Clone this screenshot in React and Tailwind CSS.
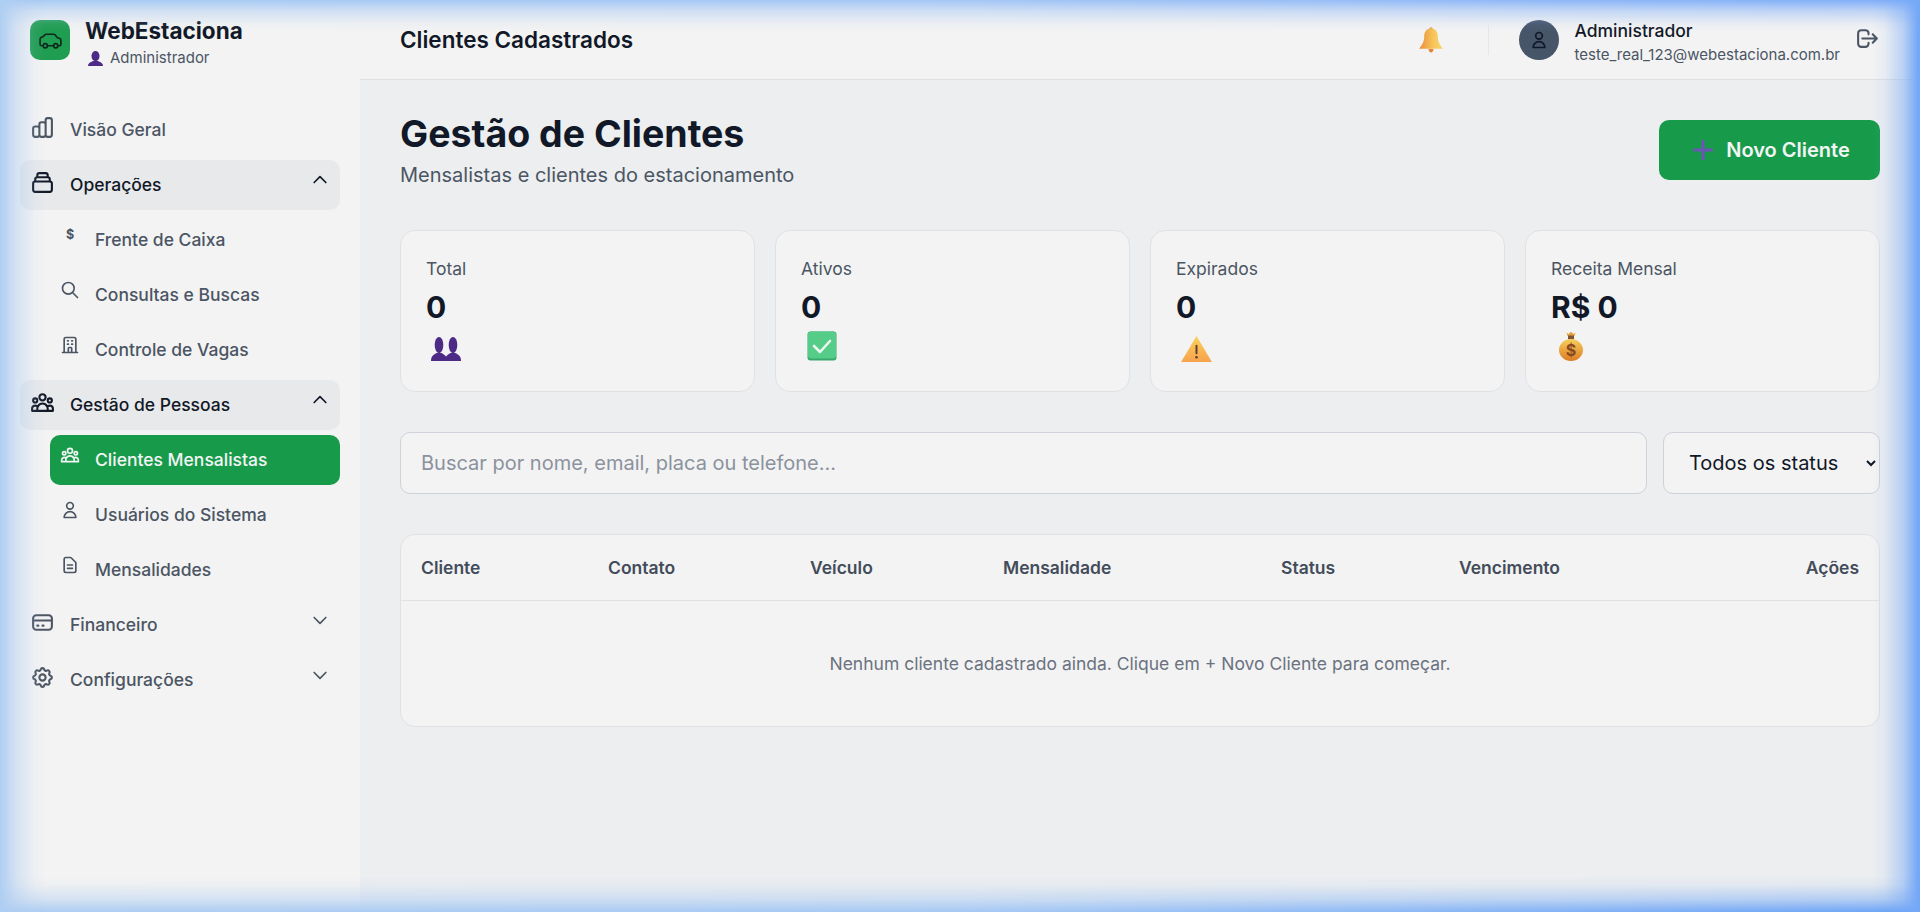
import React from 'react'
import {
  HiOutlineChartBar,
  HiOutlineCollection,
  HiOutlineSearch,
  HiOutlineOfficeBuilding,
  HiOutlineUserGroup,
  HiOutlineUser,
  HiOutlineDocumentText,
  HiOutlineCreditCard,
  HiOutlineCog,
  HiOutlineChevronUp,
  HiOutlineChevronDown,
  HiOutlineLogout,
} from 'react-icons/hi'

function CarIcon() {
  return (
    <svg viewBox="0 0 24 24" fill="none" stroke="#0f2a1c" strokeWidth="1.6" strokeLinecap="round" strokeLinejoin="round" className="w-[25px] h-[25px]">
      <path d="M5 17H3.6A1.6 1.6 0 0 1 2 15.4V11a2.5 2.5 0 0 1 2.5-2.5L6.6 6.6A2 2 0 0 1 8 6h7a2 2 0 0 1 1.5.7l2.2 2.6 1.9.5A2 2 0 0 1 22 11.700V15.400A1.600 1.600 0 0 1 20.400 17H19" />
      <circle cx="7" cy="17" r="2" />
      <path d="M9 17h6" />
      <circle cx="17" cy="17" r="2" />
    </svg>
  )
}

function PersonEmoji({ x = 0 }) {
  return (
    <g transform={`translate(${x} 0)`}>
      <ellipse cx="8" cy="5.400" rx="4.300" ry="5.400" fill="#4d2a85" />
      <path d="M0 16c0-3 2-4 5.500-5.300h5C14 12 16 13 16 16z" fill="#4d2a85" />
    </g>
  )
}

function UserEmoji() {
  return (
    <svg viewBox="0 0 16 16" className="w-[15px] h-[15px] shrink-0 ml-[3px]">
      <PersonEmoji />
    </svg>
  )
}

function UsersEmoji() {
  return (
    <svg viewBox="0 0 30 16" className="w-[30px] h-[24px] mt-[11px] ml-[5px]" preserveAspectRatio="none">
      <PersonEmoji x="0" />
      <PersonEmoji x="14" />
    </svg>
  )
}

function CheckEmoji() {
  return (
    <svg viewBox="0 0 30 30" className="w-[30px] h-[30px] mt-[5px] ml-[6px]">
      <rect x="0.500" y="0.500" width="29" height="29" rx="3" fill="#3aa76d" />
      <rect x="1" y="0.500" width="28" height="27" rx="3" fill="#55cc88" />
      <path d="M7 15l6 6 10-11" fill="none" stroke="#ecf7f0" strokeWidth="2.600" strokeLinecap="round" strokeLinejoin="round" />
    </svg>
  )
}

function WarningEmoji() {
  return (
    <svg viewBox="0 0 32 27" className="w-[31px] h-[26px] mt-[10px] ml-[5px]">
      <defs>
        <linearGradient id="warn" x1="0" y1="0" x2="0" y2="1">
          <stop offset="0" stopColor="#fad25a" />
          <stop offset="1" stopColor="#f6a24e" />
        </linearGradient>
      </defs>
      <path d="M16 0 32 27H0z" fill="url(#warn)" />
      <rect x="15" y="9" width="2" height="10" rx="1" fill="#5a3a2e" />
      <circle cx="16" cy="22" r="1.300" fill="#5a3a2e" />
    </svg>
  )
}

function MoneyEmoji() {
  return (
    <svg viewBox="0 0 30 30" className="w-[30px] h-[30px] mt-[5px] ml-[5px]">
      <defs>
        <linearGradient id="bag" x1="0" y1="0" x2="0" y2="1">
          <stop offset="0" stopColor="#f6cf5c" />
          <stop offset="1" stopColor="#dc7c24" />
        </linearGradient>
      </defs>
      <path d="M10.500 1.500 12.500 3 15 .8 17.500 3 19.500 1.500 18.500 5h-7z" fill="#e6a23a" />
      <rect x="12" y="4.500" width="6" height="4" fill="#7f5435" />
      <ellipse cx="15" cy="19" rx="12" ry="11" fill="url(#bag)" />
      <text x="15" y="25" textAnchor="middle" fontSize="16" fontWeight="700" fill="#8a4a20" fontFamily="Inter, sans-serif">$</text>
    </svg>
  )
}

function BellEmoji() {
  return (
    <svg viewBox="0 0 24 26" className="w-[24px] h-[26px]">
      <defs>
        <linearGradient id="bell" x1="0" y1="0" x2="1" y2="0">
          <stop offset="0" stopColor="#ea8f3c" />
          <stop offset="0.600" stopColor="#f7c55b" />
          <stop offset="1" stopColor="#f8d868" />
        </linearGradient>
      </defs>
      <circle cx="12" cy="2" r="1.800" fill="#ec9a40" />
      <path d="M12 1.500c-4.500 0-6.800 3.400-6.800 7.800 0 6-2.200 8.500-5 12.500h23.600c-2.800-4-5-6.500-5-12.500 0-4.400-2.300-7.800-6.800-7.800z" fill="url(#bell)" />
      <path d="M9.500 22h5c-.3 2.500-1.300 3.500-2.500 3.500s-2.200-1-2.500-3.500z" fill="#e8823a" />
    </svg>
  )
}

function NavItem({ icon: Icon, label, open, chevron }) {
  return (
    <div className={`flex items-center h-[50px] rounded-[10px] px-[10px] gap-[15px] text-[17.5px] font-medium ${open ? 'bg-[#e8e9eb] text-[#111827]' : 'text-[#4b5563]'}`}>
      <Icon className="w-[25px] h-[25px] shrink-0 mb-[5px]" />
      <span className="flex-1">{label}</span>
      {chevron === 'up' && <HiOutlineChevronUp className="w-[20px] h-[20px] mb-[10px] text-[#111827]" />}
      {chevron === 'down' && <HiOutlineChevronDown className="w-[20px] h-[20px] mb-[10px] text-[#4b5563]" />}
    </div>
  )
}

function SubItem({ icon: Icon, glyph, label, active }) {
  return (
    <div className={`ml-[30px] flex items-center h-[50px] rounded-[10px] px-[10px] gap-[15px] text-[17.5px] font-medium ${active ? 'bg-[#179b4b] text-[#f3f4f4]' : 'text-[#4b5563]'}`}>
      {glyph ? (
        <span className="w-[20px] h-[20px] mb-[10px] flex items-center justify-center text-[12.5px] font-bold leading-none">$</span>
      ) : (
        <Icon className="w-[20px] h-[20px] shrink-0 mb-[10px]" />
      )}
      <span>{label}</span>
    </div>
  )
}

function Sidebar() {
  return (
    <aside className="w-[360px] shrink-0 bg-[#f3f3f3] flex flex-col">
      <div className="h-[80px] px-[30px] flex items-center gap-[15px]">
        <div className="w-[40px] h-[40px] rounded-[10px] bg-[#1f9d50] flex items-center justify-center">
          <CarIcon />
        </div>
        <div className="pt-[5px]">
          <div className="text-[22.5px] leading-[28px] font-bold text-[#111827]">WebEstaciona</div>
          <div className="flex items-center gap-[7px] text-[15px] leading-[20px] text-[#4b5563] mt-[3px]">
            <UserEmoji />
            <span>Administrador</span>
          </div>
        </div>
      </div>
      <nav className="px-[20px] pt-[25px] flex flex-col gap-[5px]">
        <NavItem icon={HiOutlineChartBar} label="Visão Geral" />
        <NavItem icon={HiOutlineCollection} label="Operações" open chevron="up" />
        <SubItem glyph label="Frente de Caixa" />
        <SubItem icon={HiOutlineSearch} label="Consultas e Buscas" />
        <SubItem icon={HiOutlineOfficeBuilding} label="Controle de Vagas" />
        <NavItem icon={HiOutlineUserGroup} label="Gestão de Pessoas" open chevron="up" />
        <SubItem icon={HiOutlineUserGroup} label="Clientes Mensalistas" active />
        <SubItem icon={HiOutlineUser} label="Usuários do Sistema" />
        <SubItem icon={HiOutlineDocumentText} label="Mensalidades" />
        <NavItem icon={HiOutlineCreditCard} label="Financeiro" chevron="down" />
        <NavItem icon={HiOutlineCog} label="Configurações" chevron="down" />
      </nav>
    </aside>
  )
}

function Header() {
  return (
    <header className="h-[80px] shrink-0 bg-[#f3f3f3] border-b border-[#dfe1e4] pl-[40px] pr-[40px] flex items-center">
      <h2 className="flex-1 text-[22.5px] font-semibold text-[#111827]">Clientes Cadastrados</h2>
      <BellEmoji />
      <div className="w-px h-[30px] bg-[#e6e7e9] ml-[45px] mr-[30px]" />
      <div className="w-[40px] h-[40px] rounded-full bg-[#475569] flex items-center justify-center text-[#0f172a]">
        <HiOutlineUser className="w-[20px] h-[20px]" />
      </div>
      <div className="ml-[15px] pt-[5px]">
        <div className="text-[17.5px] leading-[25px] font-medium text-[#111827]">Administrador</div>
        <div className="text-[15px] leading-[23px] text-[#4b5563]">teste_real_123@webestaciona.com.br</div>
      </div>
      <HiOutlineLogout className="ml-[15px] w-[25px] h-[25px] text-[#4b5563] mb-[2px]" />
    </header>
  )
}

function StatCard({ label, value, emoji }) {
  return (
    <div className="bg-[#f3f3f3] border border-[#dfe1e4] rounded-[15px] p-[25px] h-[162px]">
      <div className="text-[17.5px] leading-[25px] text-[#4b5563]">{label}</div>
      <div className="text-[30px] leading-[37.5px] font-bold text-[#111827] mt-[7.5px]">{value}</div>
      <div className="h-[37.5px]">{emoji}</div>
    </div>
  )
}

function ClientsTable() {
  const th = 'px-[20px] py-[20px] text-left text-[17.5px] leading-[25px] font-semibold text-[#434c5a]'
  return (
    <div className="bg-[#f3f3f3] border border-[#dfe1e4] rounded-[15px] overflow-hidden">
      <table className="w-full table-fixed">
        <thead className="border-b border-[#dfe1e4]">
          <tr>
            <th className={`${th} w-[187px]`}>Cliente</th>
            <th className={`${th} w-[202px]`}>Contato</th>
            <th className={`${th} w-[193px]`}>Veículo</th>
            <th className={`${th} w-[278px]`}>Mensalidade</th>
            <th className={`${th} w-[178px]`}>Status</th>
            <th className={`${th} w-[250px]`}>Vencimento</th>
            <th className={`${th} text-right`}>Ações</th>
          </tr>
        </thead>
        <tbody>
          <tr>
            <td colSpan="7" className="py-[50px] text-center text-[17.5px] leading-[25px] text-[#6b7280]">
              Nenhum cliente cadastrado ainda. Clique em + Novo Cliente para começar.
            </td>
          </tr>
        </tbody>
      </table>
    </div>
  )
}

function Main() {
  return (
    <main className="flex-1 px-[40px] pt-[40px]">
      <div className="flex items-start justify-between h-[70px]">
        <div>
          <h1 className="text-[37.5px] leading-[28px] font-bold text-[#111827]">Gestão de Clientes</h1>
          <p className="text-[20px] leading-[30px] text-[#4b5563] mt-[12px]">Mensalistas e clientes do estacionamento</p>
        </div>
        <button className="w-[221px] h-[60px] pl-[4px] rounded-[10px] bg-[#179b4b] text-[#f3f4f4] text-[20px] font-semibold flex items-center justify-center gap-[13px]">
          <svg viewBox="0 0 20 20" className="w-[20px] h-[20px]">
            <rect x="0" y="8.500" width="20" height="3" rx="1" fill="#6d55b5" />
            <rect x="8.500" y="0" width="3" height="20" rx="1" fill="#6d55b5" />
          </svg>
          Novo Cliente
        </button>
      </div>

      <div className="grid grid-cols-4 gap-[20px] mt-[40px]">
        <StatCard label="Total" value="0" emoji={<UsersEmoji />} />
        <StatCard label="Ativos" value="0" emoji={<CheckEmoji />} />
        <StatCard label="Expirados" value="0" emoji={<WarningEmoji />} />
        <StatCard label="Receita Mensal" value="R$ 0" emoji={<MoneyEmoji />} />
      </div>

      <div className="flex gap-[16px] mt-[40px]">
        <input
          className="flex-1 h-[62px] bg-[#f3f3f3] border border-[#cfd2d8] rounded-[10px] px-[20px] text-[20px] text-[#111827] placeholder:text-[#8b929e] outline-none"
          placeholder="Buscar por nome, email, placa ou telefone..."
        />
        <select className="w-[217px] h-[62px] bg-[#f3f3f3] border border-[#cfd2d8] rounded-[10px] pl-[21px] pr-[8px] text-[20px] text-[#111827]">
          <option>Todos os status</option>
        </select>
      </div>

      <div className="mt-[40px]">
        <ClientsTable />
      </div>
    </main>
  )
}

// moldura azul desfocada em volta da janela
function EdgeGlow() {
  return (
    <div className="absolute inset-0 pointer-events-none">
      <div className="absolute top-0 inset-x-0 h-[32px] bg-gradient-to-r from-[#a9cbf3] via-[#a4c6f5] to-[#7fadf8] [mask-image:linear-gradient(to_bottom,black,rgb(0_0_0/0.45)_35%,rgb(0_0_0/0.08)_75%,transparent)]" />
      <div className="absolute bottom-0 inset-x-0 h-[36px] bg-gradient-to-r from-[#aecdf2] via-[#a5c8f4] to-[#6ba3f6] [mask-image:linear-gradient(to_top,black,rgb(0_0_0/0.45)_35%,rgb(0_0_0/0.08)_75%,transparent)]" />
      <div className="absolute left-0 inset-y-0 w-[46px] bg-[#aecdf2] [mask-image:linear-gradient(to_right,black,rgb(0_0_0/0.45)_35%,rgb(0_0_0/0.08)_75%,transparent)]" />
      <div className="absolute right-0 inset-y-0 w-[48px] bg-[#74a8f7] [mask-image:linear-gradient(to_left,black_5%,rgb(0_0_0/0.45)_35%,rgb(0_0_0/0.08)_75%,transparent)]" />
    </div>
  )
}

export default function App() {
  return (
    <div className="relative flex h-screen w-full overflow-hidden bg-[#eceef0] font-['Inter',sans-serif]">
      <Sidebar />
      <div className="flex-1 flex flex-col min-w-0">
        <Header />
        <Main />
      </div>
      <EdgeGlow />
    </div>
  )
}
